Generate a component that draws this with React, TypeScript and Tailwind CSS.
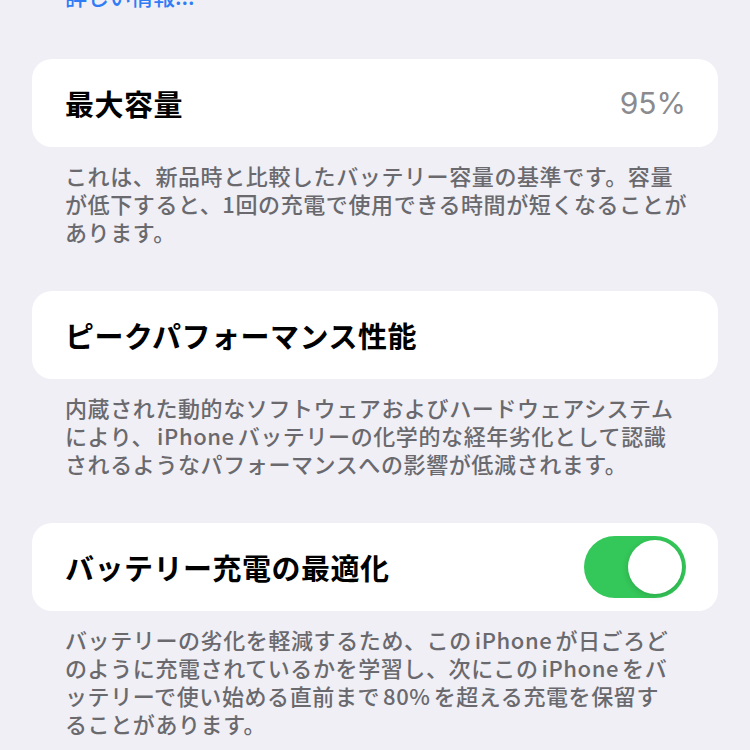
import React from "react";

interface SectionProps {
  title: string;
  right?: React.ReactNode;
  lines: React.ReactNode[];
}

// Latin words inside Japanese text get a small gap on both sides
const W = ({ children }: { children: React.ReactNode }) => (
  <span className="mx-[3px]">{children}</span>
);

const Toggle = ({ on }: { on: boolean }) => (
  <div
    className={`flex h-[62px] w-[102px] items-center rounded-full p-[4px] ${
      on ? "justify-end bg-[#34c759]" : "justify-start bg-[#e9e9eb]"
    }`}
  >
    <div className="h-[54px] w-[54px] rounded-full bg-white shadow-[0_2px_6px_rgba(0,0,0,0.15)]" />
  </div>
);

const Section = ({ title, right, lines }: SectionProps) => (
  <div className="flex flex-col">
    <div className="flex h-[88px] items-center justify-between rounded-[20px] bg-white pl-[33px] pr-[32px]">
      <span className="text-[29px] font-semibold leading-none tracking-[0.5px] text-black">
        {title}
      </span>
      {right}
    </div>
    <div className="px-[33px] pb-[46px] pt-[14px] text-[22px] font-medium leading-[28px] tracking-[0.6px] text-[#69696e]">
      {lines.map((l, i) => (
        <div key={i} className="whitespace-nowrap">
          {l}
        </div>
      ))}
    </div>
  </div>
);

export default function App() {
  return (
    <div className="h-[750px] w-[750px] overflow-hidden bg-[#f0eff5] font-['Noto_Sans_CJK_JP',sans-serif]">
      <div className="-mt-[19px] h-[28px] px-[65px] text-[22px] font-medium leading-[28px] text-[#2f7cf6]">
        詳しい情報...
      </div>
      <div className="px-8 pt-[50px]">
        <Section
          title="最大容量"
          right={
            <span className="font-['Inter',sans-serif] text-[30px] leading-none text-[#8a8a8f]">
              95%
            </span>
          }
          lines={[
            "これは、新品時と比較したバッテリー容量の基準です。容量",
            "が低下すると、1回の充電で使用できる時間が短くなることが",
            "あります。",
          ]}
        />
        <Section
          title="ピークパフォーマンス性能"
          lines={[
            "内蔵された動的なソフトウェアおよびハードウェアシステム",
            <>
              により、<W>iPhone</W>バッテリーの化学的な経年劣化として認識
            </>,
            "されるようなパフォーマンスへの影響が低減されます。",
          ]}
        />
        <Section
          title="バッテリー充電の最適化"
          right={<Toggle on />}
          lines={[
            <>
              バッテリーの劣化を軽減するため、この<W>iPhone</W>が日ごろど
            </>,
            <>
              のように充電されているかを学習し、次にこの<W>iPhone</W>をバ
            </>,
            <>
              ッテリーで使い始める直前まで<W>80%</W>を超える充電を保留す
            </>,
            "ることがあります。",
          ]}
        />
      </div>
    </div>
  );
}
